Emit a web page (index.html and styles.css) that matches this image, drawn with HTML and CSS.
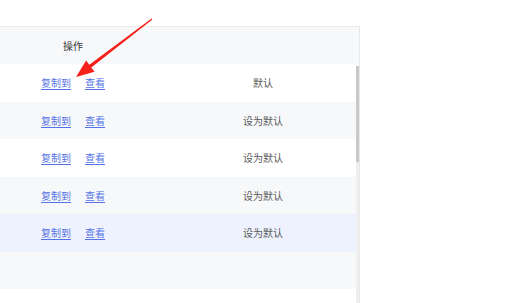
FILE: index.html
```html
<!DOCTYPE html>
<html lang="zh-CN">
<head>
    <meta charset="UTF-8">
    <meta name="viewport" content="width=device-width, initial-scale=1.0">
    <title>操作列表</title>
    <link rel="stylesheet" href="styles.css">
</head>
<body>
    <div class="panel">
        <div class="row head">
            <div class="cell ops">操作</div>
            <div class="cell def"></div>
        </div>
        <div class="body">
            <div class="rows">
                <div class="row">
                    <div class="cell ops"><a href="#">复制到</a><a href="#">查看</a></div>
                    <div class="cell def">默认</div>
                </div>
                <div class="row grey">
                    <div class="cell ops"><a href="#">复制到</a><a href="#">查看</a></div>
                    <div class="cell def">设为默认</div>
                </div>
                <div class="row">
                    <div class="cell ops"><a href="#">复制到</a><a href="#">查看</a></div>
                    <div class="cell def">设为默认</div>
                </div>
                <div class="row grey">
                    <div class="cell ops"><a href="#">复制到</a><a href="#">查看</a></div>
                    <div class="cell def">设为默认</div>
                </div>
                <div class="row hover">
                    <div class="cell ops"><a href="#">复制到</a><a href="#">查看</a></div>
                    <div class="cell def">设为默认</div>
                </div>
                <div class="row empty"></div>
            </div>
            <div class="track"><div class="thumb"></div></div>
        </div>
    </div>

    <svg class="arrow" width="525" height="303" viewBox="0 0 525 303">
        <polygon fill="#f5221b" points="76,77 86.1,60.5 89.3,64.8 151.6,18.6 152.4,19.4 91.3,67.4 94.5,71.7"/>
    </svg>
</body>
</html>
```

FILE: styles.css
```css
body {
    margin: 0;
    font-family: "Noto Sans CJK SC", "Noto Sans", sans-serif;
    font-size: 10px;
    color: #5a5a5a;
    background: #fff;
    height: 303px;
    overflow: hidden;
}
.panel {
    margin-top: 26px;
    width: 359px;
    height: 277px;
    border-top: 1px solid #ebebeb;
    border-right: 1px solid #e8e8e8;
    display: flex;
    flex-direction: column;
}
.row {
    display: flex;
    height: 37.5px;
    align-items: center;
}
.head {
    height: 37px;
    background: #f7f8fa;
    color: #333;
}
.cell.ops {
    width: 170px;
    padding-left: 41px;
    box-sizing: border-box;
    display: flex;
    gap: 14px;
}
.head .cell.ops {
    padding-left: 63px;
}
.cell.def {
    width: 186px;
    text-align: center;
}
.cell a {
    color: #5573e6;
    text-decoration: underline;
    text-underline-offset: 2px;
}
.body {
    flex: 1;
    display: flex;
}
.rows {
    width: 356px;
}
.grey {
    background: #f7f8fa;
}
.hover {
    background: #edf2fe;
}
.empty {
    background: #f7f8fa;
}
.track {
    width: 3px;
    margin-top: 2px;
    background: #efefef;
}
.thumb {
    height: 96px;
    background: #c9c9c9;
}
.arrow {
    position: absolute;
    left: 0;
    top: 0;
    pointer-events: none;
}
```
